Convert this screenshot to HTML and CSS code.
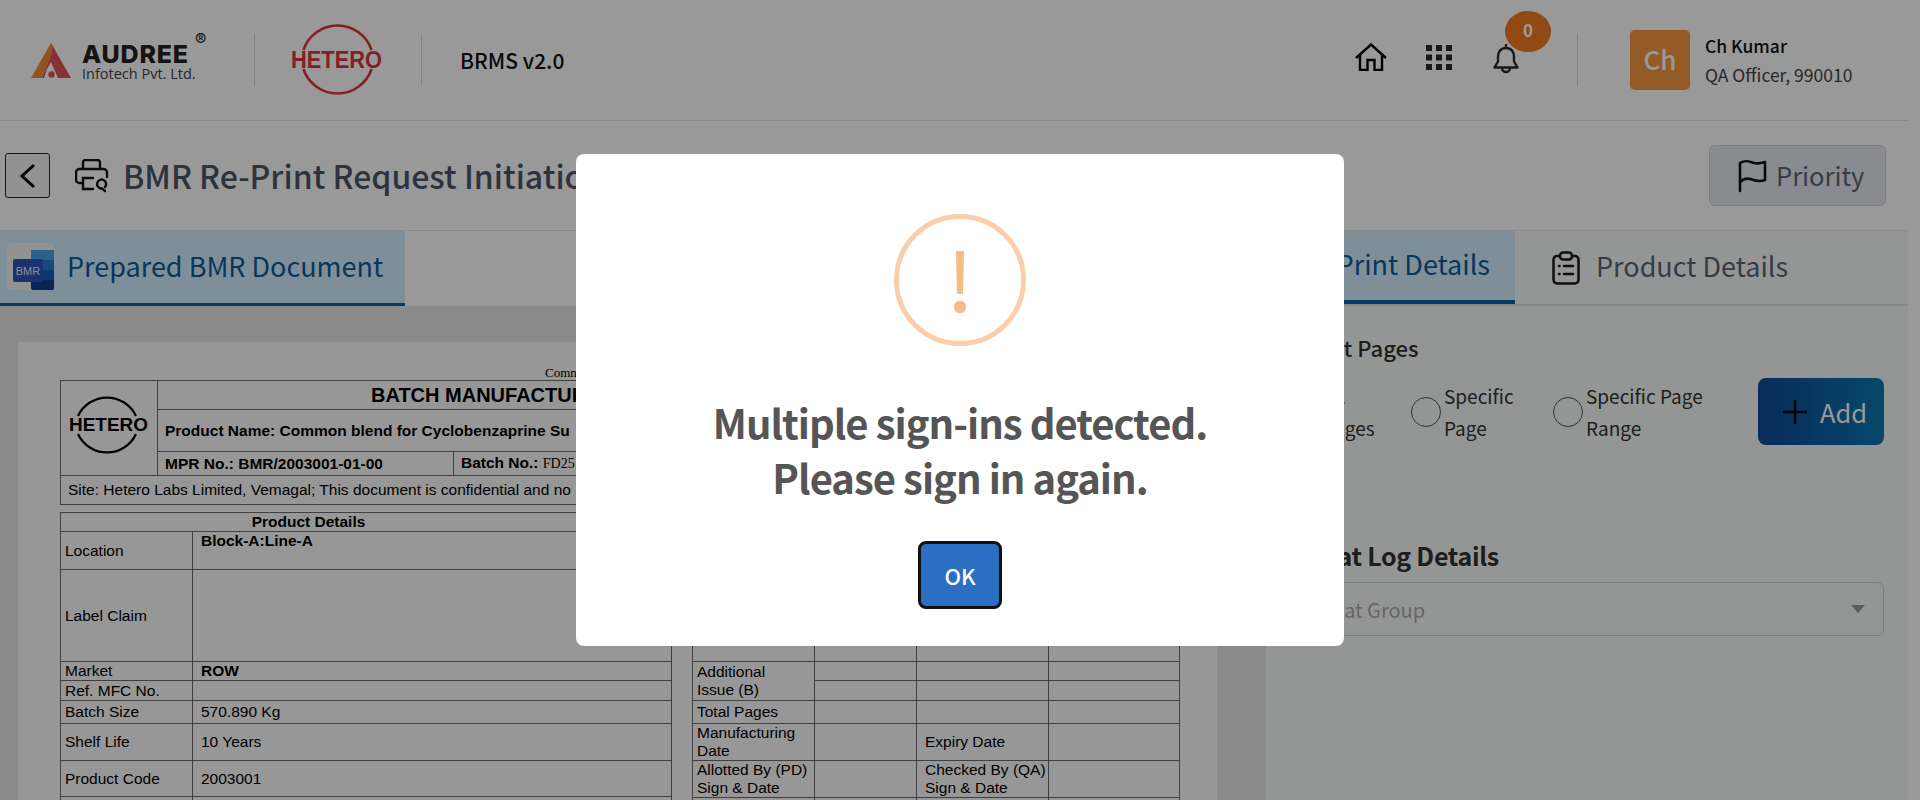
FILE: index.html
```html
<!DOCTYPE html>
<html lang="en">
<head>
  <meta charset="UTF-8">
  <title>BRMS v2.0 – BMR Re-Print Request Initiation</title>
  <link rel="stylesheet" href="styles.css">
</head>
<body>
  <div class="app">
    <header class="topbar">
      <div class="audree">
        <svg class="audree-mark" width="40" height="35" viewBox="0 0 40 35">
          <path d="M0 35 L20 0 L21 9 L11 35Z" fill="#f08a35"/>
          <path d="M20 0 L40 35 L27 35 L20 19 L16 26 L13 35 L11 35 L21 9Z" fill="#e8505b"/>
          <circle cx="20.5" cy="31.5" r="3.2" fill="#e8505b"/>
        </svg>
        <div class="audree-text">
          <div class="audree-name">AUDREE<sup class="reg">®</sup></div>
          <div class="audree-sub">Infotech Pvt. Ltd.</div>
        </div>
      </div>
      <span class="vline vline-a"></span>
      <svg class="hetero" width="96" height="78" viewBox="0 0 96 78">
        <path d="M15.4 29 A36 36 0 0 1 83.6 29 M83.6 48 A36 36 0 0 1 15.4 48" fill="none" stroke="#e0353f" stroke-width="2.6"/>
        <text x="3" y="47" font-family="Liberation Sans" font-weight="700" font-size="23" fill="#e0353f" textLength="91" lengthAdjust="spacingAndGlyphs">HETERO</text>
      </svg>
      <span class="vline vline-b"></span>
      <div class="app-name">BRMS v2.0</div>

      <div class="top-actions">
        <svg class="ico-home" width="32" height="28" viewBox="0 0 32 28" fill="none" stroke="#000" stroke-width="2.4">
          <path d="M1 15 L16 1.5 L31 15"/>
          <path d="M5 11.5 V27 H12.5 V17 H19.5 V27 H27 V11.5"/>
        </svg>
        <svg class="ico-grid" width="26" height="25" viewBox="0 0 26 25" fill="#2a2a2a">
          <rect x="0" y="0" width="6" height="6"/><rect x="10" y="0" width="6" height="6"/><rect x="20" y="0" width="6" height="6"/>
          <rect x="0" y="9.5" width="6" height="6"/><rect x="10" y="9.5" width="6" height="6"/><rect x="20" y="9.5" width="6" height="6"/>
          <rect x="0" y="19" width="6" height="6"/><rect x="10" y="19" width="6" height="6"/><rect x="20" y="19" width="6" height="6"/>
        </svg>
        <div class="bell">
          <svg width="26" height="31" viewBox="0 0 26 31" fill="none" stroke="#2a2a2a" stroke-width="2.4" stroke-linejoin="round">
            <path d="M13 1 V5"/>
            <path d="M13 5 C7.5 5 5 9 5 14 V18.5 L1.5 24.5 H24.5 L21 18.5 V14 C21 9 18.5 5 13 5Z"/>
            <path d="M9 25 A4 4 0 0 0 17 25"/>
          </svg>
          <span class="badge">0</span>
        </div>
        <span class="vline vline-c"></span>
        <div class="avatar">Ch</div>
        <div class="user">
          <div class="user-name">Ch Kumar</div>
          <div class="user-role">QA Officer, 990010</div>
        </div>
      </div>
    </header>

    <div class="titlebar">
      <button class="back" type="button">
        <svg width="18" height="26" viewBox="0 0 18 26" fill="none" stroke="#000" stroke-width="3"><path d="M15 2 L3 13 L15 24"/></svg>
      </button>
      <svg class="ico-print" width="34" height="34" viewBox="0 0 34 34" fill="none" stroke="#111" stroke-width="2.4" stroke-linecap="round">
        <path d="M8 10 V3.5 A2.5 2.5 0 0 1 10.5 1 H22.5 A2.5 2.5 0 0 1 25 3.5 V10"/>
        <path d="M7 24 H4.5 A3.5 3.5 0 0 1 1 20.5 V13.5 A3.5 3.5 0 0 1 4.5 10 H28.5 A3.5 3.5 0 0 1 32 13.5 V18"/>
        <path d="M18 19 H8 V30 H18"/>
        <path d="M30 28 A4.5 4.5 0 1 0 27 29.5 L30 32"/>
      </svg>
      <h1 class="page-title">BMR Re-Print Request Initiation</h1>
      <button class="priority" type="button">
        <svg width="30" height="34" viewBox="0 0 30 34" fill="none" stroke="#111" stroke-width="2.6" stroke-linecap="round" stroke-linejoin="round">
          <path d="M3 32 V4 C9 0 13 3 17 4 C21 5 25 4 28 3 V21 C23 23 19 22 15 20.5 C11 19 7 19 3 23"/>
        </svg>
        <span>Priority</span>
      </button>
    </div>

    <main class="columns">
      <section class="left">
        <div class="tabs-left">
          <div class="tab tab-doc">
            <svg width="48" height="48" viewBox="0 0 48 48">
              <rect x="0" y="0" width="47" height="47" rx="4" fill="#f3f3f3"/>
              <rect x="24" y="7" width="23" height="11" fill="#41a5ee"/>
              <rect x="24" y="17" width="23" height="10" fill="#2b7cd3"/>
              <rect x="24" y="27" width="23" height="10" fill="#185abd"/>
              <path d="M24 37 H47 V45 A2 2 0 0 1 45 47 H26 A2 2 0 0 1 24 45Z" fill="#103f91"/>
              <rect x="6" y="16" width="30" height="23" rx="2" fill="#2a55b8"/>
              <text x="21" y="32" text-anchor="middle" font-family="Liberation Sans" font-size="11" fill="#e8eefa">BMR</text>
            </svg>
            <span>Prepared BMR Document</span>
          </div>
        </div>
        <div class="viewer">
          <div class="paper">
            <div class="doc-caption">Common blend</div>
            <table class="doc-head">
              <colgroup><col class="c-logo"><col class="c-mpr"><col></colgroup>
              <tr class="r1">
                <td rowspan="3" class="logo-cell">
                  <svg width="84" height="68" viewBox="0 0 84 68">
                    <path d="M11 24 A32 32 0 0 1 69 24 M69 42 A32 32 0 0 1 11 42" fill="none" stroke="#000" stroke-width="2.2"/>
                    <text x="2" y="39" font-family="Liberation Sans" font-weight="700" font-size="18" textLength="79" lengthAdjust="spacingAndGlyphs">HETERO</text>
                  </svg>
                </td>
                <td colspan="2" class="doc-title">BATCH MANUFACTURING</td>
              </tr>
              <tr class="r2"><td colspan="2" class="b pad">Product Name: Common blend for Cyclobenzaprine Su</td></tr>
              <tr class="r3">
                <td class="b pad">MPR No.: BMR/2003001-01-00</td>
                <td class="pad"><b>Batch No.:</b> <span class="serif">FD25</span></td>
              </tr>
              <tr class="r4"><td colspan="3" class="pad">Site: Hetero Labs Limited, Vemagal; This document is confidential and no</td></tr>
            </table>

            <div class="doc-tables">
              <table class="details">
                <colgroup><col class="c-label"><col></colgroup>
                <tr class="h1"><td colspan="2" class="b center">Product Details</td></tr>
                <tr class="h2"><td>Location</td><td class="val b top">Block-A:Line-A</td></tr>
                <tr class="h3"><td>Label Claim</td><td class="val"></td></tr>
                <tr class="h4"><td>Market</td><td class="val b">ROW</td></tr>
                <tr class="h5"><td>Ref. MFC No.</td><td class="val"></td></tr>
                <tr class="h6"><td>Batch Size</td><td class="val">570.890 Kg</td></tr>
                <tr class="h7"><td>Shelf Life</td><td class="val">10 Years</td></tr>
                <tr class="h8"><td>Product Code</td><td class="val">2003001</td></tr>
                <tr class="h9"><td></td><td></td></tr>
              </table>
              <table class="issue">
                <colgroup><col class="c1"><col class="c2"><col class="c3"><col></colgroup>
                <tr class="h1"><td></td><td></td><td></td><td></td></tr>
                <tr class="h2"><td></td><td></td><td></td><td></td></tr>
                <tr class="h3"><td></td><td></td><td></td><td></td></tr>
                <tr class="h4"><td rowspan="2">Additional<br>Issue (B)</td><td></td><td></td><td></td></tr>
                <tr class="h5"><td></td><td></td><td></td></tr>
                <tr class="h6"><td>Total Pages</td><td></td><td></td><td></td></tr>
                <tr class="h7"><td>Manufacturing<br>Date</td><td></td><td class="val">Expiry Date</td><td></td></tr>
                <tr class="h8"><td class="tight">Allotted By (PD)<br>Sign &amp; Date</td><td></td><td class="val tight">Checked By (QA)<br>Sign &amp; Date</td><td></td></tr>
                <tr class="h9"><td></td><td></td><td></td><td></td></tr>
              </table>
            </div>
          </div>
        </div>
      </section>

      <section class="right">
        <div class="tabs-right">
          <div class="tab tab-reprint"><span>Re-Print Details</span></div>
          <div class="tab tab-product">
            <svg width="28" height="34" viewBox="0 0 28 34" fill="none" stroke="#1a1a1a" stroke-width="2.5" stroke-linecap="round">
              <path d="M8 5 H5 A3.5 3.5 0 0 0 1.5 8.5 V29 A3.5 3.5 0 0 0 5 32.5 H23 A3.5 3.5 0 0 0 26.5 29 V8.5 A3.5 3.5 0 0 0 23 5 H20"/>
              <rect x="8" y="1.5" width="12" height="7" rx="3"/>
              <path d="M7 15 H7.5 M12 15 H21 M7 23 H7.5 M12 23 H21"/>
            </svg>
            <span>Product Details</span>
          </div>
        </div>
        <div class="right-body">
          <h3 class="sub-head">Reprint Pages</h3>
          <div class="radio-row">
            <label class="radio r-all"><span class="dot"></span><span class="txt">All Pages</span></label>
            <label class="radio r-page"><span class="dot"></span><span class="txt">Specific Page</span></label>
            <label class="radio r-range"><span class="dot"></span><span class="txt">Specific Page Range</span></label>
            <button class="add" type="button">
              <svg width="24" height="24" viewBox="0 0 24 24" stroke="#000" stroke-width="2.4"><path d="M12 0 V24 M0 12 H24"/></svg>
              <span>Add</span>
            </button>
          </div>
          <h3 class="log-head">Format Log Details</h3>
          <div class="select">
            <span>Format Group</span>
            <i class="caret"></i>
          </div>
        </div>
      </section>
    </main>
  </div>

  <div class="overlay">
    <div class="modal">
      <svg class="warn" width="132" height="132" viewBox="0 0 132 132">
        <circle cx="66" cy="66" r="63.5" fill="none" stroke="#facea8" stroke-width="5"/>
        <path d="M62 37 H70 L69 80 H63Z" fill="#f8bb86"/>
        <circle cx="66" cy="93" r="6.2" fill="#f8bb86"/>
      </svg>
      <p class="modal-text">Multiple sign-ins detected.<br>Please sign in again.</p>
      <button class="ok" type="button">OK</button>
    </div>
  </div>
</body>
</html>
```

FILE: styles.css
```css
* {
  box-sizing: border-box;
}
body {
  margin: 0;
  height: 800px;
  overflow: hidden;
  background: #fff;
  color: #222;
  font-family: "Noto Sans CJK SC", "Noto Sans", sans-serif;
}
button {
  font-family: inherit;
}
.app {
  width: 1908px;
  height: 800px;
  display: flex;
  flex-direction: column;
  overflow: hidden;
}

/* top bar */
.topbar {
  height: 121px;
  flex: none;
  display: flex;
  align-items: center;
  padding-left: 31px;
  background: #fff;
  border-bottom: 1px solid #e6e6e6;
}
.audree {
  display: flex;
  align-items: center;
  width: 223px;
}
.audree-mark {
  margin-top: 1px;
}
.audree-text {
  margin-left: 11px;
  margin-top: 4px;
}
.audree-name {
  font-family: "Inter", "Liberation Sans", sans-serif;
  font-weight: 800;
  font-size: 25px;
  letter-spacing: 0.8px;
  line-height: 22px;
  color: #222;
  position: relative;
}
.reg {
  position: absolute;
  top: -11px;
  left: 113px;
  font-size: 17px;
  font-weight: 400;
  letter-spacing: 0;
  line-height: 16px;
}
.audree-sub {
  font-family: "Open Sans", sans-serif;
  font-size: 14.5px;
  line-height: 17px;
  color: #444;
}
.vline {
  width: 1px;
  height: 52px;
  background: #dcdcdc;
  flex: none;
}
.hetero {
  margin-left: 33px;
  flex: none;
}
.vline-b {
  margin-left: 37px;
}
.app-name {
  margin-left: 38px;
  font-weight: 500;
  font-size: 21px;
  line-height: 30px;
  color: #111;
}
.top-actions {
  margin-left: auto;
  display: flex;
  align-items: center;
}
.ico-home {
  margin-top: -6px;
}
.ico-grid {
  margin-left: 39px;
  margin-top: -6px;
}
.bell {
  margin-left: 41px;
  margin-top: -4px;
  position: relative;
  width: 26px;
  height: 31px;
}
.badge {
  position: absolute;
  left: 12px;
  top: -32px;
  width: 46px;
  height: 41px;
  border-radius: 50%;
  background: #f47a20;
  color: #fff;
  font-weight: 700;
  font-size: 17px;
  line-height: 38px;
  text-align: center;
}
.vline-c {
  margin-left: 58px;
}
.avatar {
  margin-left: 52px;
  width: 60px;
  height: 60px;
  border-radius: 5px;
  background: #f69a42;
  color: #fff;
  font-size: 26px;
  font-weight: 500;
  line-height: 58px;
  text-align: center;
}
.user {
  margin-left: 15px;
  width: 203px;
}
.user-name {
  font-weight: 500;
  font-size: 17.5px;
  line-height: 29px;
  color: #111;
}
.user-role {
  font-size: 17.5px;
  line-height: 29px;
  color: #444;
}

/* title row */
.titlebar {
  height: 110px;
  flex: none;
  display: flex;
  align-items: center;
  padding: 0 22px 0 5px;
  background: #fff;
  border-bottom: 1px solid #e6e6e6;
}
.back {
  width: 45px;
  height: 45px;
  padding: 0;
  display: flex;
  align-items: center;
  justify-content: center;
  background: #f4f4f4;
  border: 1px solid #222;
  border-radius: 3px;
}
.ico-print {
  margin-left: 25px;
}
.page-title {
  margin: 0 0 2px 14px;
  font-size: 32px;
  line-height: 44px;
  font-weight: 500;
  color: #4c5566;
}
.priority {
  margin-left: auto;
  width: 177px;
  height: 61px;
  padding: 0 0 0 27px;
  display: flex;
  align-items: center;
  gap: 9px;
  background: #e6e8f0;
  border: 1px solid #d0d2d8;
  border-radius: 6px;
  color: #5b6474;
  font-size: 25.5px;
}
.priority span {
  padding-bottom: 3px;
}

/* two columns */
.columns {
  flex: 1;
  display: grid;
  grid-template-columns: 1266px 1fr;
  min-height: 0;
}
.left {
  display: flex;
  flex-direction: column;
  min-height: 0;
}
.tabs-left {
  height: 75px;
  flex: none;
  background: #fff;
}
.tab {
  display: flex;
  align-items: center;
  font-size: 27px;
  line-height: 40px;
  white-space: nowrap;
}
.tab span {
  padding-bottom: 3px;
}
.tab-doc {
  width: 405px;
  height: 75px;
  padding: 0 0 0 7px;
  gap: 12px;
  background: #d4eeff;
  border-bottom: 3px solid #0c5fa8;
  color: #0e5a9a;
}
.viewer {
  flex: 1;
  background: #e6e6e6;
  padding: 36px 49px 0 18px;
  overflow: hidden;
}
.paper {
  background: #fcfcfc;
  padding: 24px 37px 0 42px;
  height: 600px;
  font-family: "Liberation Sans", Arial, sans-serif;
  font-size: 15.5px;
  line-height: 18px;
  color: #000;
}
.doc-caption {
  height: 14px;
  padding-left: 485px;
  font-family: "Liberation Serif", serif;
  font-size: 13px;
  line-height: 14px;
}
.paper table {
  border-collapse: collapse;
  table-layout: fixed;
}
.paper td {
  border: 1px solid #6a6a6a;
  padding: 0 4px;
  overflow: hidden;
}
.doc-head {
  width: 1120px;
}
.c-logo {
  width: 97px;
}
.c-mpr {
  width: 296px;
}
.logo-cell {
  text-align: center;
}
.paper .logo-cell {
  padding: 0;
}
.r1 {
  height: 29px;
}
.r2 {
  height: 42px;
}
.r3 {
  height: 24px;
}
.r4 {
  height: 29px;
}
.doc-title {
  font-weight: 700;
  font-size: 20px;
}
.paper .doc-title {
  padding-left: 213px;
}
.paper .pad {
  padding-left: 7px;
  white-space: nowrap;
}
.b {
  font-weight: 700;
}
.serif {
  font-family: "Liberation Serif", serif;
  font-size: 14px;
}
.center {
  text-align: center;
}
.paper .center {
  padding-right: 119px;
}
.top {
  vertical-align: top;
}
.doc-tables {
  margin-top: 7px;
  display: flex;
  gap: 20px;
  align-items: flex-start;
}
.details {
  width: 612px;
}
.c-label {
  width: 132px;
}
.paper .val {
  padding-left: 8px;
}
.paper .tight {
  padding-right: 0;
  white-space: nowrap;
}
.issue {
  width: 488px;
}
.c1 {
  width: 122px;
}
.c2 {
  width: 102px;
}
.c3 {
  width: 132px;
}
.h1 {
  height: 19px;
}
.h2 {
  height: 38px;
}
.h3 {
  height: 92px;
}
.h4 {
  height: 19px;
}
.h5 {
  height: 20px;
}
.h6 {
  height: 23px;
}
.h7 {
  height: 37px;
}
.h8 {
  height: 36px;
}
.h9 {
  height: 30px;
}

/* right column */
.right {
  background: #f7faf8;
  min-width: 0;
}
.tabs-right {
  height: 75px;
  display: flex;
  border-bottom: 2px solid #dee0e8;
}
.tab-reprint {
  width: 249px;
  height: 73px;
  justify-content: flex-end;
  padding-right: 25px;
  background: #d4eeff;
  border-bottom: 4px solid #0c5fa8;
  color: #0e5a9a;
}
.tab-product {
  height: 73px;
  padding-left: 37px;
  gap: 16px;
  color: #5b6474;
}
.right-body {
  padding: 26px 24px 0 8px;
}
.sub-head {
  margin: 0;
  font-size: 22px;
  font-weight: 500;
  line-height: 30px;
  color: #333;
}
.radio-row {
  margin-top: 16px;
  height: 67px;
  display: flex;
  align-items: center;
}
.radio {
  display: flex;
  align-items: center;
  gap: 3px;
  font-size: 19px;
  line-height: 32px;
  color: #333;
}
.dot {
  width: 30px;
  height: 30px;
  flex: none;
  border: 1.5px solid #555;
  border-radius: 50%;
}
.r-all {
  width: 121px;
  margin-left: 16px;
}
.r-all .txt {
  width: 60px;
}
.r-page {
  width: 142px;
}
.r-page .txt {
  width: 90px;
}
.r-range {
  width: 205px;
}
.r-range .txt {
  width: 130px;
}
.add {
  width: 126px;
  height: 67px;
  padding: 0 0 0 25px;
  display: flex;
  align-items: center;
  gap: 13px;
  border: none;
  border-radius: 8px;
  background: linear-gradient(90deg, #0e4a96, #0a78b4);
  color: #fff;
  font-size: 25.5px;
}
.log-head {
  margin: 93px 0 0;
  font-size: 25px;
  font-weight: 700;
  letter-spacing: -0.3px;
  line-height: 34px;
  color: #333;
}
.select {
  margin-top: 10px;
  height: 54px;
  padding: 0 18px 0 20px;
  display: flex;
  align-items: center;
  justify-content: space-between;
  border: 1px solid #d4d4d4;
  border-radius: 6px;
  font-size: 20px;
  color: #aaa;
}
.caret {
  width: 0;
  height: 0;
  border-left: 7px solid transparent;
  border-right: 7px solid transparent;
  border-top: 8px solid #999;
}

/* dialog */
.overlay {
  position: fixed;
  inset: 0;
  display: flex;
  align-items: center;
  justify-content: center;
  background: rgba(0, 0, 0, 0.4);
}
.modal {
  width: 768px;
  height: 492px;
  padding-top: 60px;
  display: flex;
  flex-direction: column;
  align-items: center;
  background: #fff;
  border-radius: 8px;
}
.modal-text {
  margin: 49px 0 0;
  font-size: 40px;
  font-weight: 700;
  letter-spacing: -1px;
  line-height: 55px;
  text-align: center;
  color: #555;
}
.ok {
  margin-top: 36px;
  width: 84px;
  height: 68px;
  padding: 0;
  background: #2a6fc2;
  border: 3px solid #111;
  border-radius: 8px;
  color: #fff;
  font-size: 22px;
  font-weight: 500;
}
```
